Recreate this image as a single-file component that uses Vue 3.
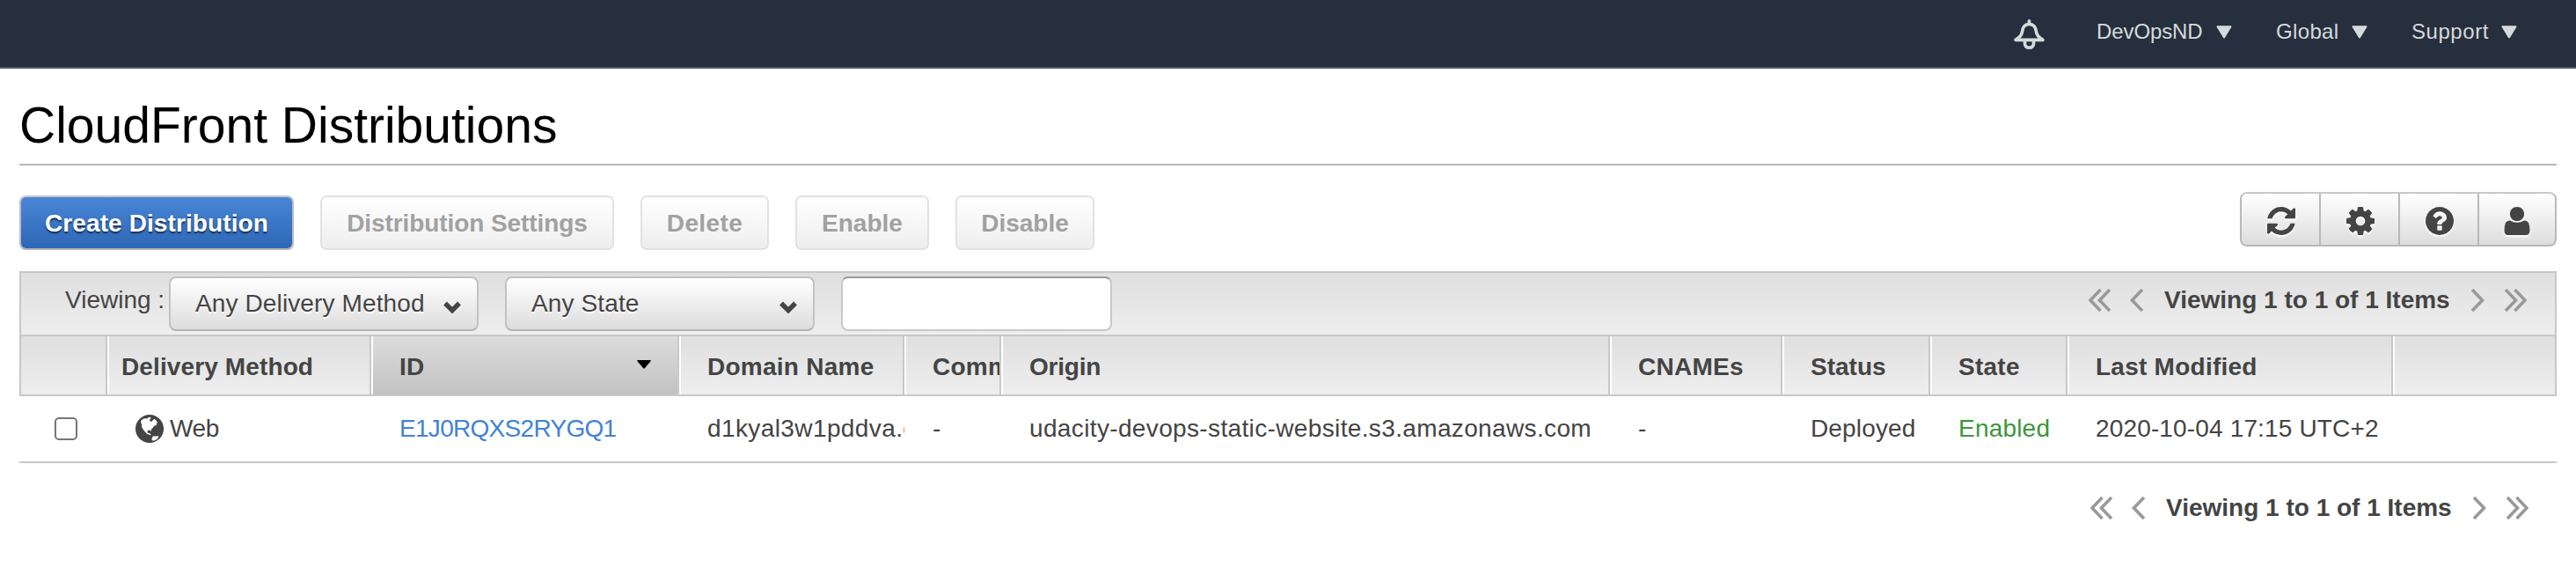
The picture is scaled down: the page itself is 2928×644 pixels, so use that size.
<script setup>
import { ref } from 'vue'

const menus = [
  { key: 'account', label: 'DevOpsND' },
  { key: 'region', label: 'Global' },
  { key: 'support', label: 'Support' },
]

const actions = [
  { key: 'settings', label: 'Distribution Settings' },
  { key: 'delete', label: 'Delete' },
  { key: 'enable', label: 'Enable' },
  { key: 'disable', label: 'Disable' },
]

const tools = [
  {
    key: 'refresh',
    path: 'M1639 1056q0 5-1 7-64 268-268 434.5t-478 166.5q-146 0-282.5-55t-243.5-157l-129 129q-19 19-45 19t-45-19-19-45v-448q0-26 19-45t45-19h448q26 0 45 19t19 45-19 45l-137 137q71 66 161 102t187 36q134 0 250-65t186-179q11-17 53-117 8-23 30-23h192q13 0 22.500 9.500t9.500 22.500zm25-800v448q0 26-19 45t-45 19h-448q-26 0-45-19t-19-45 19-45l138-138q-148-137-349-137-134 0-250 65t-186 179q-11 17-53 117-8 23-30 23h-199q-13 0-22.500-9.500t-9.500-22.500v-7q65-268 270-434.500t480-166.500q146 0 284 55.500t245 156.500l130-129q19-19 45-19t45 19 19 45z',
  },
  {
    key: 'preferences',
    path: 'M1152 896q0-106-75-181t-181-75-181 75-75 181 75 181 181 75 181-75 75-181zm512-109v222q0 12-8 23t-20 13l-185 28q-19 54-39 91 35 50 107 138 10 12 10 25t-9 23q-27 37-99 108t-94 71q-12 0-26-9l-138-108q-44 23-91 38-16 136-29 186-7 28-36 28h-222q-14 0-24.500-8.500t-11.500-21.500l-28-184q-49-16-90-37l-141 107q-10 9-25 9-14 0-25-11-126-114-165-168-7-10-7-23 0-12 8-23 15-21 51-66.500t54-70.500q-27-50-41-99l-183-27q-13-2-21-12.500t-8-23.500v-222q0-12 8-23t19-13l186-28q14-46 39-92-40-57-107-138-10-12-10-24 0-10 9-23 26-36 98.500-107.500t94.500-71.500q13 0 26 10l138 107q44-23 91-38 16-136 29-186 7-28 36-28h222q14 0 24.500 8.500t11.500 21.500l28 184q49 16 90 37l142-107q9-9 24-9 13 0 25 10 129 119 165 170 7 8 7 22 0 12-8 23-15 21-51 66.500t-54 70.500q26 50 41 98l183 28q13 2 21 12.500t8 23.500z',
  },
  {
    key: 'help',
    path: 'M1024 1376v-192q0-14-9-23t-23-9h-192q-14 0-23 9t-9 23v192q0 14 9 23t23 9h192q14 0 23-9t9-23zm256-672q0-88-55.500-163t-138.500-116-170-41q-243 0-371 213-15 24 8 42l132 100q7 6 19 6 16 0 25-12 53-68 86-92 34-24 86-24 48 0 85.500 26t37.500 59q0 38-20 61t-68 45q-63 28-115.500 86.500t-52.500 125.500v36q0 14 9 23t23 9h192q14 0 23-9t9-23q0-19 21.500-49.500t54.500-49.500q32-18 49-28.500t46-35 44.500-48 28-60.500 12.500-81zm384 192q0 209-103 385.500t-279.500 279.500-385.500 103-385.500-103-279.500-279.500-103-385.500 103-385.500 279.500-279.500 385.500-103 385.500 103 279.500 279.500 103 385.500z',
  },
  {
    key: 'user',
    path: 'M510 870Q700 980 896 980T1282 870Q1460 870 1525 1010T1590 1400Q1590 1664 1400 1664H392Q202 1664 202 1400Q202 1150 267 1010T510 870ZM896 128C1120 128 1284 290 1284 510S1120 900 896 900S508 730 508 510S672 128 896 128Z',
  },
]

const columns = [
  { key: 'check', label: '' },
  { key: 'method', label: 'Delivery Method' },
  { key: 'id', label: 'ID', sorted: true },
  { key: 'domain', label: 'Domain Name' },
  { key: 'comment', label: 'Comment' },
  { key: 'origin', label: 'Origin' },
  { key: 'cnames', label: 'CNAMEs' },
  { key: 'status', label: 'Status' },
  { key: 'state', label: 'State' },
  { key: 'modified', label: 'Last Modified' },
  { key: 'filler', label: '' },
]

const rows = [
  {
    method: 'Web',
    id: 'E1J0RQXS2RYGQ1',
    domain: 'd1kyal3w1pddva.cloudfront.net',
    comment: '-',
    origin: 'udacity-devops-static-website.s3.amazonaws.com',
    cnames: '-',
    status: 'Deployed',
    state: 'Enabled',
    modified: '2020-10-04 17:15 UTC+2',
  },
]

const pagers = ['top', 'bottom']
const search = ref('')
</script>

<template>
  <div class="page">
    <header class="nav">
      <svg class="bell" viewBox="0 0 36 36">
        <path d="M18.500 6.500C13.500 6.500 11.200 10 10.600 14.500C10 19 8 21 3 24.300H34C29 21 27 19 26.400 14.500C25.800 10 23.500 6.500 18.500 6.500Z" />
        <path d="M18.500 2.800V6M13.500 25.500V28.200C13.500 31.300 15.500 33.200 18.500 33.200S23.500 31.300 23.500 28.200V25.500" />
      </svg>
      <div v-for="m in menus" :key="m.key" class="menu" :class="m.key">
        <span>{{ m.label }}</span>
        <svg viewBox="0 0 18 15"><path d="M1.500 1.200H16.500L9 13.500Z" /></svg>
      </div>
    </header>

    <main>
      <h1>CloudFront Distributions</h1>

      <div class="toolbar">
        <button class="btn primary">Create Distribution</button>
        <button v-for="a in actions" :key="a.key" class="btn" :class="a.key" disabled>{{ a.label }}</button>
        <div class="tools">
          <button v-for="t in tools" :key="t.key">
            <svg viewBox="128 128 1536 1536"><path :d="t.path" fill-rule="evenodd" /></svg>
          </button>
        </div>
      </div>

      <div class="filters">
        <span class="viewing">Viewing :</span>
        <div class="select method">
          <span>Any Delivery Method</span>
          <svg viewBox="0 0 20 14"><path d="M2 2.500L10 10.500L18 2.500" /></svg>
        </div>
        <div class="select">
          <span>Any State</span>
          <svg viewBox="0 0 20 14"><path d="M2 2.500L10 10.500L18 2.500" /></svg>
        </div>
        <input v-model="search" class="search" type="text" />
      </div>

      <div class="grid head">
        <div v-for="c in columns" :key="c.key" class="cell" :class="[c.key, { sorted: c.sorted }]">
          <span>{{ c.label }}</span>
          <svg v-if="c.sorted" viewBox="0 0 16 10"><path d="M1 0H15Q16.500 0 15.500 1.200L9 9Q8 10 7 9L0.500 1.200Q-0.500 0 1 0Z" /></svg>
        </div>
      </div>

      <div v-for="r in rows" :key="r.id" class="grid body">
        <div v-for="c in columns" :key="c.key" class="cell" :class="c.key">
          <input v-if="c.key === 'check'" type="checkbox" class="box" />
          <svg v-if="c.key === 'method'" class="globe" viewBox="0 0 32 32">
            <circle cx="16" cy="16" r="16" />
            <path class="land" d="M6.500 6.300L10 4.200L13 4.500L15.500 2.800L17.500 3.200L17 5L15.500 6.500L18 8L20 6L21.500 4.800L23.500 6.500L25 9L23.500 10.500L24.300 12L21.500 12.500L20 14.500L18 16.500L17.800 19L16.500 17.500L14 18L13.200 20L15 21L17 21.500L17.500 23.300L16 23L12.800 21.500L11 19.500L8.500 16.500L7 13.500L7.300 11L6 9ZM19 25.500L20.500 24.300L23 24.500L26.500 24.200L25 27.500L22 29.300L19 29.500L18.500 27.500Z" />
          </svg>
          <span>{{ r[c.key] }}</span>
        </div>
      </div>
    </main>

    <div v-for="p in pagers" :key="p" class="pager" :class="p">
      <svg class="double" viewBox="0 0 26 28"><path d="M13.500 2L2 14L13.500 26M24 2L12.500 14L24 26" /></svg>
      <svg class="single" viewBox="0 0 16 28"><path d="M14 2L2.500 14L14 26" /></svg>
      <span>Viewing 1 to 1 of 1 Items</span>
      <svg class="single" viewBox="0 0 16 28"><path d="M2 2L13.500 14L2 26" /></svg>
      <svg class="double" viewBox="0 0 26 28"><path d="M2 2L13.500 14L2 26M12.500 2L24 14L12.500 26" /></svg>
    </div>
  </div>
</template>

<style>
body {
  margin: 0;
  background: #fff;
}
</style>

<style scoped>
.page {
  position: relative;
  width: 2928px;
  height: 644px;
  overflow: hidden;
  background: #fff;
  color: #444;
  font-family: "Liberation Sans", Arial, sans-serif;
  font-size: 28px;
}
.page *,
.page {
  box-sizing: border-box;
}
svg {
  display: block;
  flex: none;
}
.nav {
  display: flex;
  justify-content: flex-end;
  align-items: flex-start;
  height: 78px;
  padding-right: 66px;
  background: #262f3e;
  border-bottom: 2px solid #545964;
  color: #d5dbdb;
  font-size: 24px;
}
.bell {
  width: 36px;
  height: 36px;
  margin: 21px 58px 0 0;
  fill: none;
  stroke: #d5dbdb;
  stroke-width: 3.7;
  stroke-linejoin: round;
  stroke-linecap: round;
}
.menu {
  display: flex;
  align-items: center;
  justify-content: space-between;
  height: 72px;
  width: 155px;
  margin-right: 49px;
}
.menu span {
  margin-left: 1px;
}
.menu.account {
  letter-spacing: -0.1px;
}
.menu.region {
  width: 105px;
  letter-spacing: 0.35px;
}
.menu.support {
  width: 121px;
  margin-right: 1px;
  letter-spacing: 0.55px;
}
.menu svg {
  width: 18px;
  height: 15px;
  fill: #d5dbdb;
  stroke: #d5dbdb;
  stroke-width: 2;
  stroke-linejoin: round;
}
main {
  padding: 0 22px;
}
h1 {
  margin: 0 0 34px;
  height: 110px;
  border-bottom: 2px solid #b7b7b7;
  color: #000;
  font-size: 57px;
  font-weight: 400;
  line-height: 128px;
}
.toolbar {
  display: flex;
  align-items: flex-start;
  height: 86px;
}
.btn {
  width: 146px;
  height: 62px;
  margin-right: 30px;
  padding: 2px 0 0;
  border: 2px solid #e2e2e2;
  border-radius: 7px;
  background: linear-gradient(#fff, #eee);
  color: #a1a1a1;
  font: bold 28px "Liberation Sans", Arial, sans-serif;
}
.btn.primary {
  width: 312px;
  border-color: #c8c8c8 #b9bdc6 #b7b7b7;
  background: linear-gradient(#4a87d8, #2c65b4) border-box;
  background-clip: padding-box;
  color: #fff;
  letter-spacing: 0.1px;
  text-shadow: 0 2px 2px rgba(0, 0, 0, 0.6);
}
.btn.settings {
  width: 334px;
  letter-spacing: -0.08px;
}
.btn.delete {
  letter-spacing: 0.4px;
}
.btn.enable {
  width: 152px;
}
.btn.disable {
  width: 158px;
}
.tools {
  display: flex;
  width: 360px;
  height: 62px;
  margin: -4px 0 0 auto;
  border: 2px solid #b9b9b9;
  border-top-color: #c8c8c8;
  border-radius: 8px;
  background: linear-gradient(#fff, #ddd);
}
.tools button {
  display: flex;
  align-items: center;
  justify-content: center;
  width: 90px;
  padding: 0;
  border: 0;
  border-right: 2px solid #b9b9b9;
  background: none;
}
.tools button:last-child {
  width: 86px;
  border-right: 0;
}
.tools svg {
  width: 32px;
  height: 32px;
  margin-top: 3px;
  fill: #444;
  filter: drop-shadow(0 2px 1px #fff);
}
.tools button:not(:last-child) svg {
  margin-left: 2px;
}
.filters {
  display: flex;
  height: 74px;
  padding: 4px 0 0 50px;
  border: 2px solid #c8c8c8;
  background: linear-gradient(#dfdfdf, #eee);
}
.viewing {
  width: 118px;
  line-height: 54px;
  white-space: nowrap;
}
.select {
  display: flex;
  align-items: center;
  justify-content: space-between;
  width: 352px;
  height: 62px;
  margin-right: 30px;
  padding: 0 18px 0 28px;
  border: 2px solid #c2c2c2;
  border-bottom-color: #b3b3b3;
  border-radius: 8px;
  background: linear-gradient(#fff, #ddd);
  text-shadow: 0 2px 1px #fff;
  white-space: nowrap;
  letter-spacing: 0.12px;
}
.select span {
  line-height: 58px;
}
.select svg {
  width: 20px;
  height: 14px;
  margin-top: 7px;
  fill: none;
  stroke: #444;
  stroke-width: 5.4;
}
.search {
  width: 308px;
  height: 62px;
  padding: 0 16px;
  border: 2px solid #c8c8c8;
  border-top-color: #999;
  border-radius: 8px;
  background: #fff;
  font: 28px "Liberation Sans", Arial, sans-serif;
  outline: none;
}
.grid {
  display: grid;
  grid-template-columns: 100px 300px 350px 256px 110px 692px 196px 168px 156px 370px 1fr;
}
.cell {
  display: flex;
  align-items: center;
  min-width: 0;
  padding-left: 32px;
  overflow: hidden;
  white-space: nowrap;
}
.cell.method {
  padding-left: 16px;
}
.head {
  grid-template-columns: 98px 300px 350px 256px 110px 692px 196px 168px 156px 370px 1fr;
  height: 68px;
  border: 2px solid #c8c8c8;
  border-top: 0;
  background: linear-gradient(#dfdfdf, #eee);
  font-weight: bold;
}
.head .cell {
  padding-top: 4px;
  border-right: 2px solid #c8c8c8;
  box-shadow: inset 2px 0 #fff;
  letter-spacing: 0.25px;
}
.head .cell.method {
  letter-spacing: 0.12px;
}
.head .cell.check {
  box-shadow: none;
}
.head .cell.filler {
  border-right: 0;
}
.head .cell.sorted {
  justify-content: space-between;
  padding-right: 30px;
  background: linear-gradient(#dcdcdc, #c2c2c2);
}
.head .cell.sorted svg {
  width: 16px;
  height: 10px;
  margin-top: -6px;
  fill: #000;
}
.head .cell.origin {
  letter-spacing: -0.2px;
}
.head .cell.status {
  letter-spacing: 0;
}
.body {
  height: 76px;
  border-bottom: 2px solid #c8c8c8;
}
.body .cell.check {
  padding-left: 40px;
}
.box {
  appearance: none;
  width: 26px;
  height: 26px;
  margin: 0;
  border: 2px solid #767676;
  border-radius: 5px;
  background: #fff;
}
.body .cell.method {
  padding-left: 32px;
  letter-spacing: -0.4px;
}
.globe {
  width: 32px;
  height: 32px;
  margin-right: 7px;
  fill: #444;
}
.land {
  fill: #fff;
}
.body .id {
  color: #4183d7;
  letter-spacing: -0.7px;
}
.body .domain {
  letter-spacing: 0.4px;
}
.body .origin {
  letter-spacing: 0.36px;
}
.body .status,
.body .modified {
  letter-spacing: 0.15px;
}
.body .state {
  color: #3c963c;
  letter-spacing: 0.2px;
}
.pager {
  position: absolute;
  display: flex;
  align-items: center;
  height: 40px;
  font-weight: bold;
}
.pager.top {
  top: 321px;
  right: 56px;
}
.pager.bottom {
  top: 557px;
  right: 54px;
}
.pager span {
  width: 325px;
  margin: 0 23px;
  white-space: nowrap;
}
.pager svg {
  height: 28px;
  fill: none;
  stroke: #999;
  stroke-width: 3.6;
}
.pager .single {
  width: 16px;
}
.pager .double {
  width: 26px;
}
.pager .double:first-child {
  margin-right: 21px;
}
.pager .double:last-child {
  margin-left: 22px;
}
</style>
